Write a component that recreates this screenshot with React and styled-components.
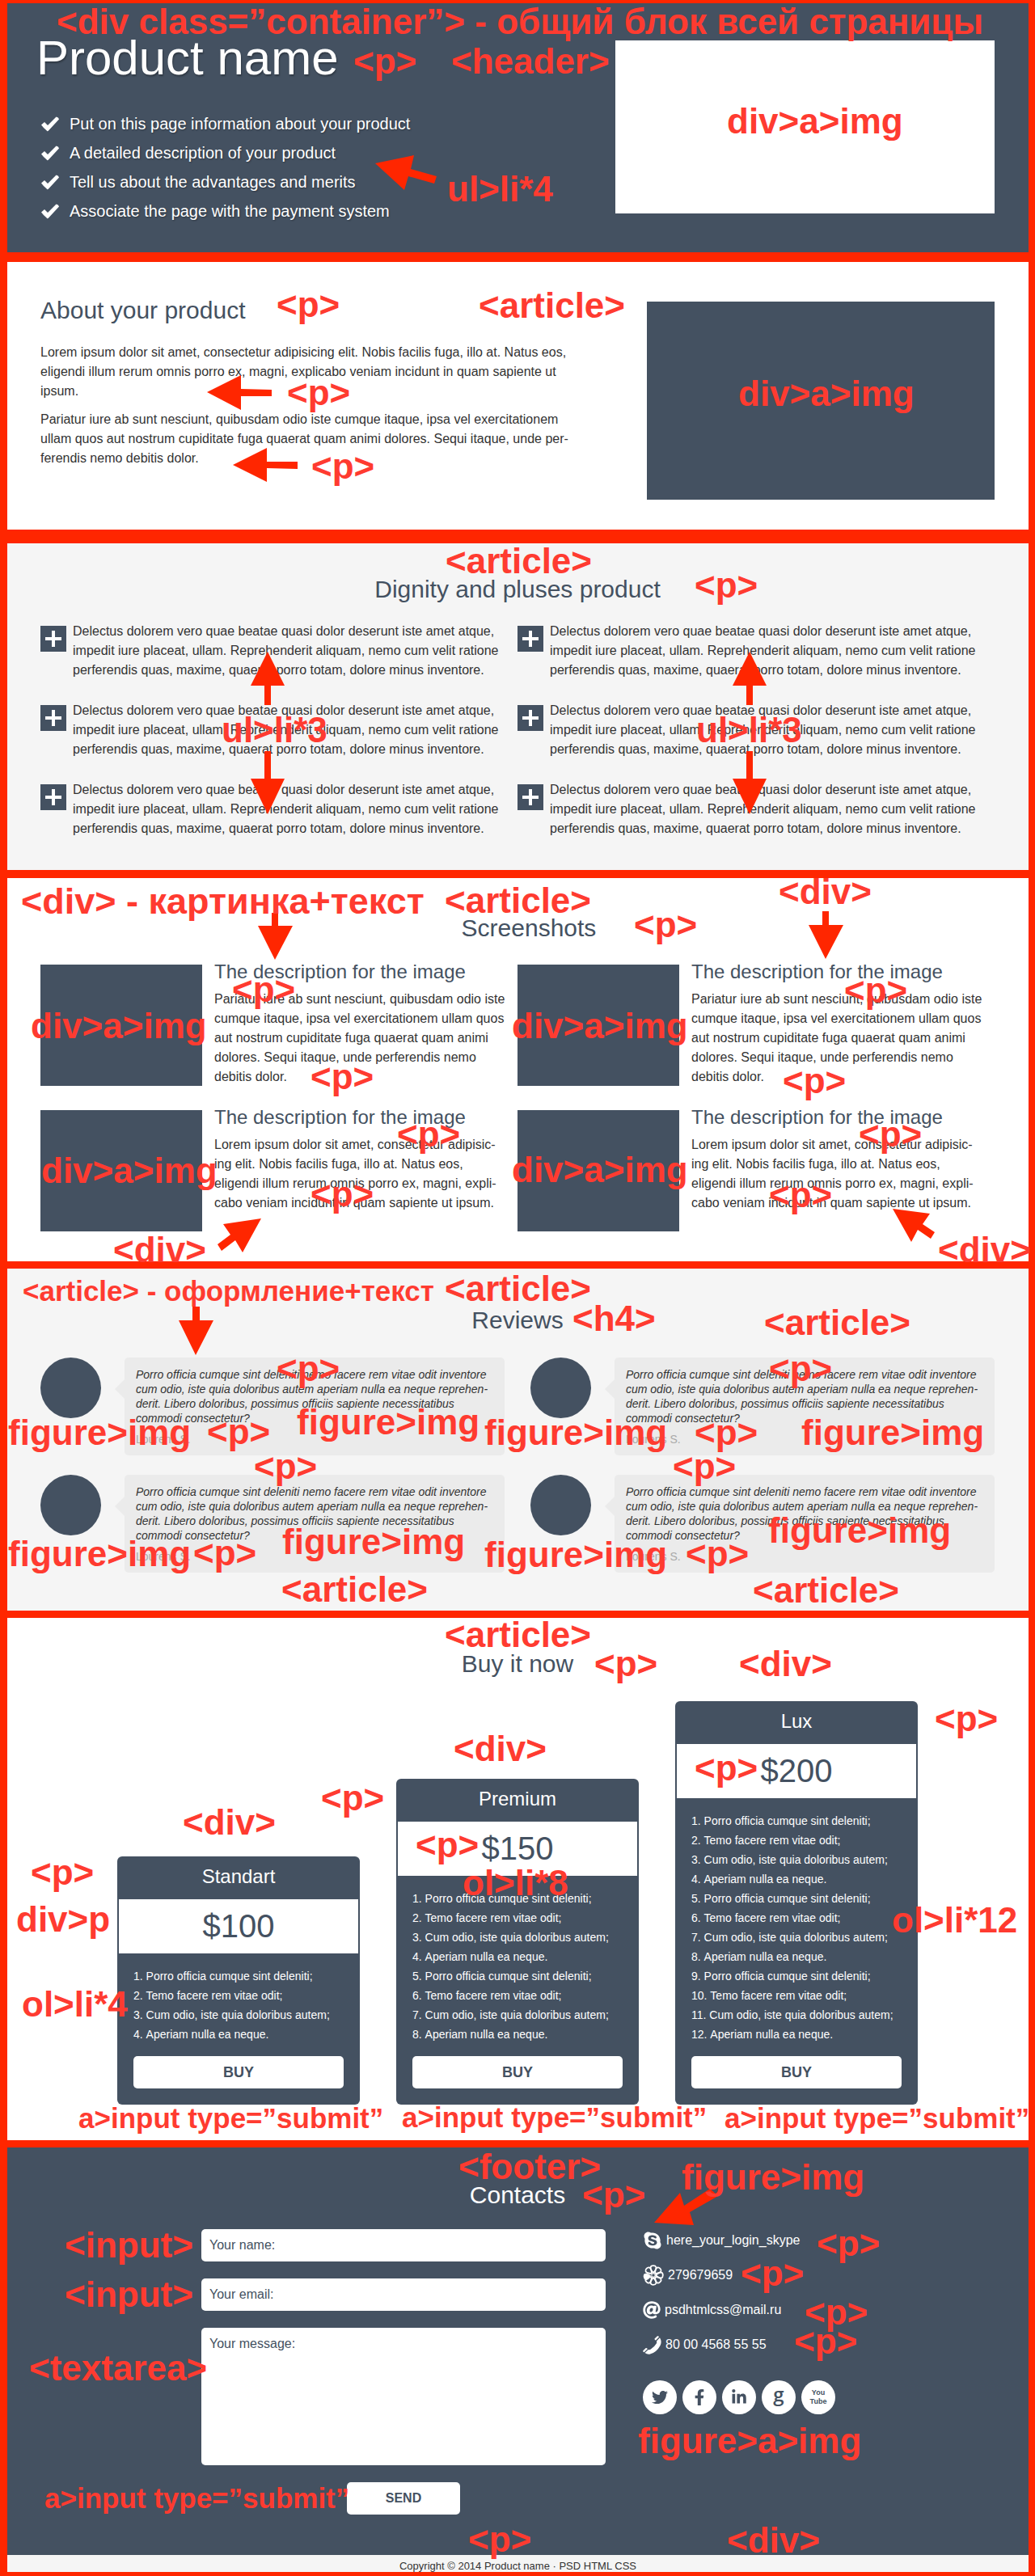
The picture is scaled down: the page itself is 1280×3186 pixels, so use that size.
import React from "react";
import styled, { createGlobalStyle, css } from "styled-components";
import {
  FaSkype,
  FaAt,
  FaTwitter,
  FaFacebookF,
  FaLinkedinIn,
} from "react-icons/fa";

const slate = "#445161";
const frame = "#ff2600";
const noteRed = "#ff3b30";
const sans = `"Liberation Sans", Arial, Helvetica, sans-serif`;

const GlobalStyle = createGlobalStyle`
  *, *::before, *::after { box-sizing: border-box; }
  body {
    margin: 0;
    background: ${frame};
    color: #333;
    font: 16px/24px ${sans};
  }
  h1, h2, h3, h4, p, ul, ol, figure { margin: 0; padding: 0; font-weight: 400; }
  ul { list-style: none; }
  a { color: inherit; text-decoration: none; }
`;

const Page = styled.div`
  position: relative;
  overflow: hidden;
  padding: 4px 8px 5px 9px;
  background: ${frame};
`;

const tones = {
  dark: css`
    background: ${slate};
    color: #fff;
  `,
  light: css`
    background: #fff;
  `,
  grey: css`
    background: #f5f5f5;
  `,
};

const Section = styled.section`
  ${({ $tone }) => tones[$tone]}
  padding: ${({ $top }) => $top}px 42px ${({ $bottom }) => $bottom}px 41px;
  margin-bottom: ${({ $gap = 9 }) => $gap}px;
`;

const Heading = styled.h2`
  font-size: 30px;
  line-height: 36px;
  color: ${({ $light }) => ($light ? "#fff" : slate)};
  text-align: ${({ $align = "center" }) => $align};
  padding-left: ${({ $indent = 0 }) => $indent}px;
  margin-bottom: ${({ $space = 22 }) => $space}px;
`;

const Split = styled.div`
  display: flex;
  justify-content: space-between;
  align-items: flex-start;
`;

const Picture = styled.a`
  display: block;
  flex: none;
  width: ${({ $w }) => $w}px;
  height: ${({ $h }) => $h}px;
  margin-top: ${({ $drop }) => $drop}px;
  background: ${({ $fill = slate }) => $fill};
`;

const Title = styled.h1`
  font-size: 60px;
  line-height: 60px;
  margin: 0 0 33px -5px;
  text-shadow: 1px 2px 2px rgba(0, 0, 0, 0.3);
`;

const FeatureList = styled.ul`
  font-size: 20px;
  line-height: 36px;
  text-shadow: 1px 1px 2px rgba(0, 0, 0, 0.35);
`;

const Feature = styled.li`
  display: flex;
  align-items: center;
  gap: 12px;
`;

const CheckSvg = styled.svg`
  width: 24px;
  height: 19px;
  fill: #fff;
`;

const Paragraph = styled.p`
  & + & {
    margin-top: 11px;
  }
`;

const TwoColumns = styled.div`
  display: grid;
  grid-template-columns: 1fr 1fr;
  column-gap: ${({ $gap = 0 }) => $gap}px;
  row-gap: 24px;
`;

const PlusList = styled.ul`
  display: grid;
  gap: 26px;
`;

const PlusItem = styled.li`
  display: flex;
  align-items: flex-start;
  gap: 8px;
`;

const PlusSvg = styled.svg`
  flex: none;
  width: 32px;
  height: 32px;
  margin-top: 5px;
  background: ${slate};
  fill: #fff;
`;

const Shot = styled.div`
  display: flex;
  align-items: flex-start;
  gap: 15px;
`;

const ShotTitle = styled.h3`
  font-size: 24px;
  line-height: 28px;
  color: ${slate};
  margin-bottom: 8px;
`;

const Review = styled.article`
  display: flex;
  align-items: flex-start;
  gap: 29px;
`;

const Avatar = styled.figure`
  flex: none;
  width: 75px;
  height: 75px;
  border-radius: 50%;
  background: ${slate};
`;

const Bubble = styled.div`
  position: relative;
  flex: 1;
  padding: 12px 0 11px 14px;
  border-radius: 5px;
  background: #ebebeb;
  font-size: 14px;
  line-height: 18px;

  &::before {
    content: "";
    position: absolute;
    top: 27px;
    left: -12px;
    border: solid transparent;
    border-width: 12px 12px 12px 0;
    border-right-color: #ebebeb;
  }
`;

const Quote = styled.p`
  font-style: italic;
  margin-bottom: 8px;
`;

const Author = styled.p`
  color: #aaa;
`;

const Plans = styled.div`
  display: flex;
  justify-content: center;
  align-items: flex-end;
  gap: 45px;
`;

const Plan = styled.div`
  width: 300px;
  padding-bottom: 20px;
  border-radius: 6px;
  background: ${slate};
  color: #fff;
`;

const PlanName = styled.p`
  padding: 11px 0 14px;
  font-size: 24px;
  line-height: 28px;
  text-align: center;
`;

const Price = styled.p`
  margin: 0 2px;
  background: #fff;
  color: ${slate};
  font-size: 40px;
  line-height: 67px;
  text-align: center;
`;

const PlanItems = styled.ol`
  && {
    padding: 16px 20px 15px;
  }
  list-style: decimal inside;
  font-size: 14px;
`;

const buttonLook = css`
  display: block;
  height: 40px;
  border: 0;
  border-radius: 5px;
  background: #fff;
  color: ${slate};
  font-family: ${sans};
  font-weight: 700;
  line-height: 40px;
  padding: 0;
  cursor: pointer;
`;

const BuyButton = styled.button`
  ${buttonLook}
  width: 260px;
  margin: 0 auto;
  font-size: 18px;
`;

const SendButton = styled.button`
  ${buttonLook}
  width: 140px;
  align-self: center;
  font-size: 16px;
`;

const ContactRow = styled.div`
  display: flex;
  align-items: flex-start;
  gap: 46px;
  padding-left: 199px;
`;

const Form = styled.form`
  display: flex;
  flex-direction: column;
  gap: 21px;
  width: 500px;
`;

const fieldLook = css`
  display: block;
  width: 100%;
  border: 0;
  border-radius: 5px;
  background: #fff;
  color: ${slate};
  font: 16px/24px ${sans};
  padding: 8px 10px;
  outline-offset: 2px;

  &::placeholder {
    color: ${slate};
    opacity: 1;
  }
`;

const Field = styled.input`
  ${fieldLook}
  height: 40px;
`;

const Message = styled.textarea`
  ${fieldLook}
  height: 170px;
  resize: none;
`;

const ContactList = styled.ul`
  display: grid;
  gap: 19px;
  padding-top: 2px;
  margin-bottom: 32px;
`;

const Contact = styled.li`
  display: flex;
  align-items: center;
  gap: 5px;
  height: 24px;
`;

const Socials = styled.div`
  display: flex;
  gap: 7px;
`;

const Social = styled.a`
  display: flex;
  align-items: center;
  justify-content: center;
  width: 42px;
  height: 42px;
  border-radius: 50%;
  background: #fff;
  color: ${slate};
`;

const GoogleMark = styled.span`
  font: 600 24px/24px "Open Sans", sans-serif;
  padding-bottom: 8px;
`;

const TubeMark = styled.span`
  font: 700 9px/11px "Liberation Sans Narrow", ${sans};
  text-align: center;
`;

const Copyright = styled.div`
  padding-top: 6px;
  background: #f5f5f5;
  font-size: 13px;
  line-height: 15px;
  text-align: center;
`;

/* Markup notes lie over the finished page */
const NoteLayer = styled.div`
  position: absolute;
  inset: 0;
  pointer-events: none;
`;

/* font size and distance from the top of the line to its baseline */
const noteSizes = { large: [44, 36], medium: [45, 37], small: [35, 29] };

const Note = styled.span`
  position: absolute;
  left: ${({ $x }) => $x + 1}px;
  top: ${({ $y, $size }) => $y - noteSizes[$size][1]}px;
  font-size: ${({ $size }) => noteSizes[$size][0]}px;
  line-height: 1;
  font-weight: 700;
  white-space: pre;
  color: ${noteRed};
`;

const ArrowSvg = styled.svg`
  position: absolute;
  width: 100%;
  height: 100%;
  fill: ${frame};
`;

const Check = () => (
  <CheckSvg viewBox="0 0 24 19" aria-hidden="true">
    <path d="M1 10.500 L5 7 L9 11 L19.500 .5 Q22.500 1 23 3.500 L10 17.500 Q9 19 8 17.800 Q3.500 14 1 10.500Z" />
  </CheckSvg>
);

const Plus = () => (
  <PlusSvg viewBox="0 0 32 32" aria-hidden="true">
    <path d="M14 6h4v8h8v4h-8v8h-4v-8H6v-4h8z" />
  </PlusSvg>
);

const Flower = () => (
  <svg width="26" height="26" viewBox="0 0 26 26" aria-hidden="true">
    <g fill="none" stroke="#fff" strokeWidth="1.800">
      {[0, 45, 90, 135, 180, 225, 315].map((a) => (
        <path
          key={a}
          transform={`rotate(${a} 13 13)`}
          d="M13 10 C10.500 7.500 9 5 9.700 3 C10.500 .6 15.500 .6 16.300 3 C17 5 15.500 7.500 13 10Z"
        />
      ))}
    </g>
    <path
      fill="#fff"
      transform="rotate(258 13 13)"
      d="M13 10 C10 7.500 8 5 9 2.500 C10.500 0 15.500 0 17 2.500 C18 5 16 7.500 13 10Z"
    />
    <circle cx="13" cy="13" r="2.200" fill={slate} stroke="#fff" />
  </svg>
);

const Phone = () => (
  <svg width="23" height="23" viewBox="0 0 23 23" fill="#fff" aria-hidden="true">
    <path d="M14.500 3.500 L18 .3 Q19.500 -.3 20 1.200 L16 5.500 Q14.500 5.500 14.500 3.500Z" />
    <path d="M17 6.500 L21 2.200 Q24 7 21.500 12 Q17 20.500 9 22.500 Q5.500 23.200 2.500 21 L6.800 17 Q8 17.600 9.500 16.800 Q14.500 13.500 16.800 9.500 Q17.600 8 17 6.500Z" />
    <path d="M.3 18.200 L3.800 15 Q5.500 15 5.800 16.200 L1.600 20.200 Q0 20 .3 18.200Z" />
  </svg>
);

const features = [
  "Put on this page information about your product",
  "A detailed description of your product",
  "Tell us about the advantages and merits",
  "Associate the page with the payment system",
];

const planLines = [
  "Porro officia cumque sint deleniti;",
  "Temo facere rem vitae odit;",
  "Cum odio, iste quia doloribus autem;",
  "Aperiam nulla ea neque.",
];

const plans = [
  { name: "Standart", price: "$100", count: 4 },
  { name: "Premium", price: "$150", count: 8 },
  { name: "Lux", price: "$200", count: 12 },
];

const P = "<p>";
const DIV = "<div>";
const ART = "<article>";
const IMG = "div>a>img";
const FIG = "figure>img";
const SUBMIT = "a>input type=”submit”";

/* text, left edge, baseline, size */
const notes = [
  ["<div class=”container”> - общий блок всей страницы", 69, 41],
  [P, 436, 90],
  ["<header>", 557, 90],
  [IMG, 898, 164],
  ["ul>li*4", 552, 248],

  [P, 341, 391],
  [ART, 591, 392],
  [IMG, 912, 501],
  [P, 354, 500],
  [P, 384, 591],

  [ART, 550, 708],
  [P, 858, 738],
  ["ul>li*3", 273, 917],
  ["ul>li*3", 860, 917],

  ["<div> - картинка+текст", 25, 1129, "medium"],
  [ART, 549, 1128],
  [DIV, 962, 1117],
  [P, 783, 1158],
  [P, 286, 1238],
  [P, 1043, 1239],
  [IMG, 37, 1283],
  [IMG, 632, 1283],
  [P, 383, 1346],
  [P, 967, 1351],
  [P, 490, 1417],
  [P, 1061, 1417],
  [IMG, 50, 1462],
  [IMG, 632, 1461],
  [P, 383, 1491],
  [P, 950, 1492],
  [DIV, 139, 1560],
  [DIV, 1159, 1560],

  ["<article> - оформление+текст", 27, 1608, "small"],
  [ART, 549, 1608],
  ["<h4>", 707, 1645],
  [ART, 944, 1650],
  [P, 341, 1707],
  [P, 950, 1707],
  [FIG, 9, 1786],
  [P, 255, 1785],
  [FIG, 366, 1773],
  [FIG, 598, 1786],
  [P, 858, 1786],
  [FIG, 990, 1786],
  [P, 313, 1828],
  [P, 831, 1828],
  [FIG, 9, 1936],
  [P, 238, 1935],
  [FIG, 348, 1921],
  [FIG, 598, 1937],
  [P, 847, 1936],
  [FIG, 949, 1907],
  [ART, 347, 1980],
  [ART, 930, 1981],

  [ART, 549, 2036],
  [P, 734, 2072],
  [DIV, 913, 2072],
  [P, 1155, 2140],
  [DIV, 560, 2177],
  [P, 858, 2201],
  [P, 396, 2238],
  [DIV, 225, 2268],
  [P, 513, 2296],
  [P, 37, 2330],
  ["div>p", 19, 2388],
  ["ol>li*8", 571, 2343],
  ["ol>li*4", 26, 2493],
  ["ol>li*12", 1102, 2389],
  [SUBMIT, 96, 2631, "small"],
  [SUBMIT, 496, 2630, "small"],
  [SUBMIT, 895, 2631, "small"],

  ["<footer>", 566, 2694],
  [FIG, 842, 2707],
  [P, 719, 2729],
  ["<input>", 79, 2791],
  [P, 1009, 2789],
  [P, 915, 2826],
  ["<input>", 79, 2852],
  [P, 994, 2874],
  [P, 981, 2910],
  ["<textarea>", 35, 2943],
  ["figure>a>img", 788, 3033],
  [SUBMIT, 54, 3101, "small"],
  [P, 578, 3155],
  [DIV, 898, 3156],
];

const arrows = [
  "464,202 512,192 508,209 540,218 537,227 505,218 500,235",
  "256,485 298,464 298,481 336,482 336,490 298,490 298,507",
  "288,575 330,554 330,571 368,571 368,580 330,579 330,596",
  "331,806 352,848 335,848 335,872 327,872 327,848 310,848",
  "927,806 948,848 931,848 931,872 923,872 923,848 906,848",
  "331,1007 310,963 327,963 327,929 335,929 335,963 352,963",
  "927,1007 906,963 923,963 923,929 931,929 931,963 948,963",
  "340,1187 319,1145 336,1145 336,1129 344,1129 344,1145 362,1145",
  "1021,1186 1000,1144 1017,1144 1017,1127 1025,1127 1025,1144 1043,1144",
  "323,1507 300,1549 291,1534 274,1547 269,1539 285,1527 276,1514",
  "1104,1495 1150,1501 1141,1514 1156,1524 1151,1532 1135,1521 1127,1536",
  "242,1676 221,1633 238,1633 238,1616 247,1616 247,1633 264,1633",
  "809,2749 841,2712 846,2728 878,2707 888,2716 853,2736 858,2752",
];

const PlusColumn = () => (
  <PlusList>
    {[1, 2, 3].map((n) => (
      <PlusItem key={n}>
        <Plus />
        <p>
          Delectus dolorem vero quae beatae quasi dolor deserunt iste amet atque,
          <br />
          impedit iure placeat, ullam. Reprehenderit aliquam, nemo cum velit ratione
          <br />
          perferendis quas, maxime, quaerat porro totam, dolore minus inventore.
        </p>
      </PlusItem>
    ))}
  </PlusList>
);

const ShotCard = ({ lines }) => (
  <Shot>
    <Picture href="#" $w={200} $h={150} $drop={5} aria-label="Screenshot" />
    <div>
      <ShotTitle>The description for the image</ShotTitle>
      <p>
        {lines.map((line) => (
          <React.Fragment key={line}>
            {line}
            <br />
          </React.Fragment>
        ))}
      </p>
    </div>
  </Shot>
);

const shotA = [
  "Pariatur iure ab sunt nesciunt, quibusdam odio iste",
  "cumque itaque, ipsa vel exercitationem ullam quos",
  "aut nostrum cupiditate fuga quaerat quam animi",
  "dolores. Sequi itaque, unde perferendis nemo",
  "debitis dolor.",
];

const shotB = [
  "Lorem ipsum dolor sit amet, consectetur adipisic-",
  "ing elit. Nobis facilis fuga, illo at. Natus eos,",
  "eligendi illum rerum omnis porro ex, magni, expli-",
  "cabo veniam incidunt in quam sapiente ut ipsum.",
];

export default function App() {
  return (
    <Page>
      <GlobalStyle />

      <Section as="header" $tone="dark" $top={38} $bottom={33} $gap={12}>
        <Split>
          <div>
            <Title>Product name</Title>
            <FeatureList>
              {features.map((text) => (
                <Feature key={text}>
                  <Check />
                  {text}
                </Feature>
              ))}
            </FeatureList>
          </div>
          <Picture href="#" $w={469} $h={214} $drop={8} $fill="#fff" aria-label="Product" />
        </Split>
      </Section>

      <Section as="article" $tone="light" $top={42} $bottom={37} $gap={17}>
        <Split>
          <div>
            <Heading $align="left">About your product</Heading>
            <Paragraph>
              Lorem ipsum dolor sit amet, consectetur adipisicing elit. Nobis facilis fuga, illo at. Natus eos,
              <br />
              eligendi illum rerum omnis porro ex, magni, explicabo veniam incidunt in quam sapiente ut
              <br />
              ipsum.
            </Paragraph>
            <Paragraph>
              Pariatur iure ab sunt nesciunt, quibusdam odio iste cumque itaque, ipsa vel exercitationem
              <br />
              ullam quos aut nostrum cupiditate fuga quaerat quam animi dolores. Sequi itaque, unde per-
              <br />
              ferendis nemo debitis dolor.
            </Paragraph>
          </div>
          <Picture href="#" $w={430} $h={245} $drop={7} aria-label="About the product" />
        </Split>
      </Section>

      <Section as="article" $tone="grey" $top={39} $bottom={39} $gap={10}>
        <Heading>Dignity and pluses product</Heading>
        <TwoColumns>
          <PlusColumn />
          <PlusColumn />
        </TwoColumns>
      </Section>

      <Section as="article" $tone="light" $top={44} $bottom={37}>
        <Heading $indent={28}>Screenshots</Heading>
        <TwoColumns>
          <ShotCard lines={shotA} />
          <ShotCard lines={shotA} />
          <ShotCard lines={shotB} />
          <ShotCard lines={shotB} />
        </TwoColumns>
      </Section>

      <Section as="article" $tone="grey" $top={46} $bottom={47}>
        <Heading as="h4" $space={28}>
          Reviews
        </Heading>
        <TwoColumns $gap={32}>
          {[1, 2, 3, 4].map((n) => (
            <Review key={n}>
              <Avatar />
              <Bubble>
                <Quote>
                  Porro officia cumque sint deleniti nemo facere rem vitae odit inventore
                  <br />
                  cum odio, iste quia doloribus autem aperiam nulla ea neque reprehen-
                  <br />
                  derit. Libero doloribus, possimus officiis sapiente necessitatibus
                  <br />
                  commodi consectetur?
                </Quote>
                <Author>Lourens S.</Author>
              </Bubble>
            </Review>
          ))}
        </TwoColumns>
      </Section>

      <Section as="article" $tone="light" $top={39} $bottom={44}>
        <Heading $space={28}>Buy it now</Heading>
        <Plans>
          {plans.map(({ name, price, count }) => (
            <Plan key={name}>
              <PlanName>{name}</PlanName>
              <Price>{price}</Price>
              <PlanItems>
                {Array.from({ length: count }, (_, i) => (
                  <li key={i}>{planLines[i % 4]}</li>
                ))}
              </PlanItems>
              <BuyButton type="submit">BUY</BuyButton>
            </Plan>
          ))}
        </Plans>
      </Section>

      <footer>
        <Section as="div" $tone="dark" $top={41} $bottom={50} $gap={0}>
          <Heading $light $space={24}>
            Contacts
          </Heading>
          <ContactRow>
            <Form onSubmit={(e) => e.preventDefault()}>
              <Field type="text" placeholder="Your name:" aria-label="Your name" />
              <Field type="email" placeholder="Your email:" aria-label="Your email" />
              <Message placeholder="Your message:" aria-label="Your message" />
              <SendButton type="submit">SEND</SendButton>
            </Form>
            <div>
              <ContactList>
                <Contact>
                  <FaSkype size={24} aria-hidden="true" />
                  <p>here_your_login_skype</p>
                </Contact>
                <Contact>
                  <Flower />
                  <p>279679659</p>
                </Contact>
                <Contact>
                  <FaAt size={22} aria-hidden="true" />
                  <p>psdhtmlcss@mail.ru</p>
                </Contact>
                <Contact>
                  <Phone />
                  <p>80 00 4568 55 55</p>
                </Contact>
              </ContactList>
              <Socials>
                <Social href="#" aria-label="Twitter">
                  <FaTwitter size={20} />
                </Social>
                <Social href="#" aria-label="Facebook">
                  <FaFacebookF size={20} />
                </Social>
                <Social href="#" aria-label="LinkedIn">
                  <FaLinkedinIn size={20} />
                </Social>
                <Social href="#" aria-label="Google">
                  <GoogleMark>g</GoogleMark>
                </Social>
                <Social href="#" aria-label="YouTube">
                  <TubeMark>
                    You
                    <br />
                    Tube
                  </TubeMark>
                </Social>
              </Socials>
            </div>
          </ContactRow>
        </Section>
        <Copyright>
          <p>Copyright © 2014 Product name · PSD HTML CSS</p>
        </Copyright>
      </footer>

      <NoteLayer>
        <ArrowSvg aria-hidden="true">
          {arrows.map((points) => (
            <polygon key={points} points={points} />
          ))}
        </ArrowSvg>
        {notes.map(([text, x, y, size = "large"]) => (
          <Note key={`${x}-${y}`} $x={x} $y={y} $size={size}>
            {text}
          </Note>
        ))}
      </NoteLayer>
    </Page>
  );
}
